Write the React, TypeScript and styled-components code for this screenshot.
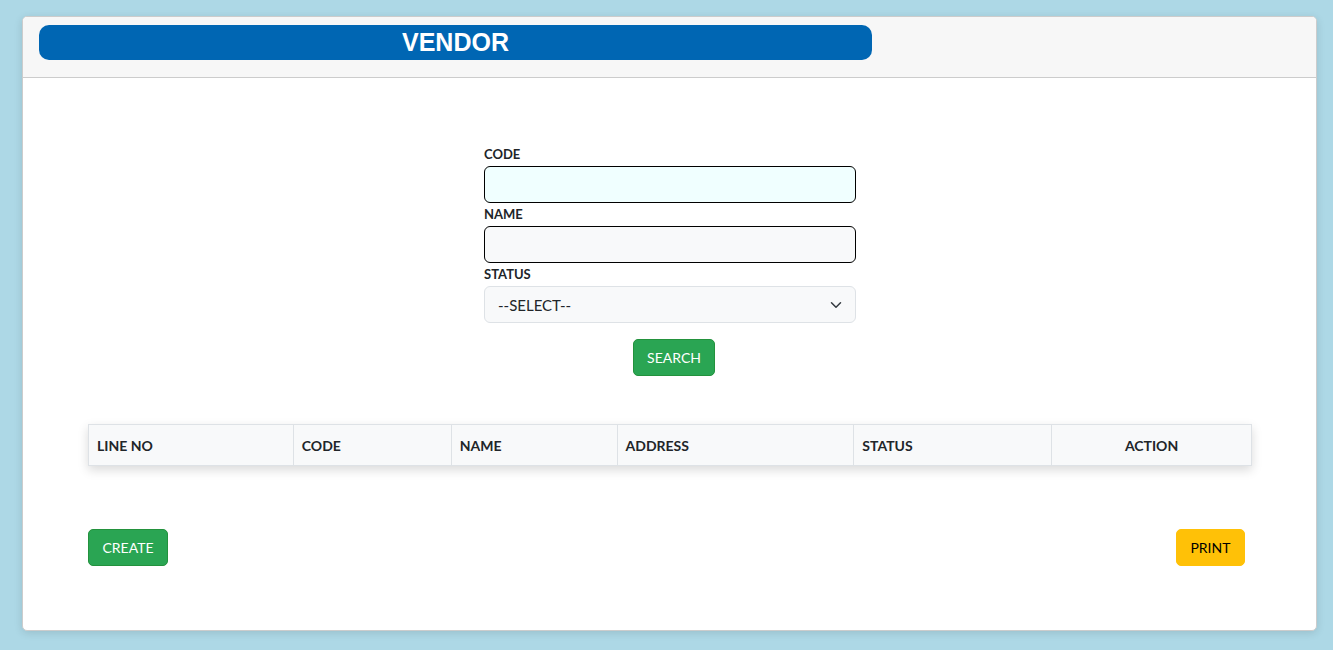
import React from 'react'
import styled, { createGlobalStyle } from 'styled-components'

const GlobalStyle = createGlobalStyle`
  * { box-sizing: border-box; }
  body {
    margin: 0;
    background: #add8e6;
    font-family: Lato, "Noto Sans", sans-serif;
    color: #212529;
  }
`

const Page = styled.div`
  padding: 16px 16px 19px 22px;
  height: 650px;
`

const Card = styled.div`
  background: #fff;
  border: 1px solid #cccccc;
  border-radius: 5px;
  box-shadow: 0 2px 8px rgba(0, 0, 0, 0.12);
  height: 615px;
  display: flex;
  flex-direction: column;
  overflow: hidden;
`

const Header = styled.div`
  background: #f7f7f7;
  border-bottom: 1px solid #cccccc;
  height: 61px;
  padding: 8px 16px;
`

const TitleBar = styled.div`
  width: 833px;
  height: 35px;
  border-radius: 10px;
  background: #0066b3;
  color: #fff;
  font-family: "Liberation Sans", Arial, sans-serif;
  font-weight: 700;
  font-size: 25px;
  display: flex;
  align-items: center;
  justify-content: center;
`

const Body = styled.div`
  padding: 65px 64px 0 65px;
  display: flex;
  flex-direction: column;
`

const Form = styled.div`
  width: 372px;
  align-self: center;
  margin-left: 0;
  display: flex;
  flex-direction: column;
`

const Label = styled.label`
  font-size: 13px;
  font-weight: 700;
  color: #212529;
  height: 23px;
  line-height: 23px;
`

const Input = styled.input<{ $tint?: string }>`
  height: 37px;
  width: 100%;
  border: 1px solid #000;
  border-radius: 6px;
  background: ${p => p.$tint || '#f8f9fa'};
  font-size: 14px;
  padding: 6px 12px;
`

const SelectBox = styled.div`
  height: 37px;
  width: 100%;
  border: 1px solid #dee2e6;
  border-radius: 6px;
  background: #f8f9fa;
  font-size: 15px;
  color: #212529;
  padding: 0 13px 0 13px;
  display: flex;
  align-items: center;
  justify-content: space-between;
`

const Button = styled.button<{ $variant: 'success' | 'warning' }>`
  height: 37px;
  border-radius: 5px;
  font-family: Lato, "Noto Sans", sans-serif;
  font-size: 14px;
  padding: 0 13.5px;
  border: 1px solid ${p => (p.$variant === 'success' ? '#23923d' : '#ffc107')};
  background: ${p => (p.$variant === 'success' ? '#2aa553' : '#ffc107')};
  color: ${p => (p.$variant === 'success' ? '#fff' : '#000')};
`

const SearchRow = styled.div`
  display: flex;
  justify-content: center;
  margin-top: 16px;
  padding-left: 8px;
`

const Table = styled.table`
  margin-top: 48px;
  width: 1164px;
  border-collapse: collapse;
  background: #f8f9fa;
  box-shadow: 0 4px 10px rgba(0, 0, 0, 0.15);
`

const Th = styled.th<{ $w: number; $center?: boolean }>`
  width: ${p => p.$w}px;
  height: 41px;
  border: 1px solid #dee2e6;
  text-align: ${p => (p.$center ? 'center' : 'left')};
  padding: 0 8px;
  font-size: 14px;
  font-weight: 700;
  color: #212529;
`

const Footer = styled.div`
  margin-top: 63px;
  display: flex;
  justify-content: space-between;
  padding-right: 7px;
`

const columns: { label: string; w: number; center?: boolean }[] = [
  { label: 'LINE NO', w: 205 },
  { label: 'CODE', w: 158 },
  { label: 'NAME', w: 166 },
  { label: 'ADDRESS', w: 237 },
  { label: 'STATUS', w: 198 },
  { label: 'ACTION', w: 200, center: true },
]

export default function App() {
  return (
    <>
      <GlobalStyle />
      <Page>
        <Card>
          <Header>
            <TitleBar>VENDOR</TitleBar>
          </Header>
          <Body>
            <Form>
              <Label>CODE</Label>
              <Input $tint="#f0ffff" />
              <Label>NAME</Label>
              <Input />
              <Label>STATUS</Label>
              <SelectBox>
                <span>--SELECT--</span>
                <svg width="12" height="12" viewBox="0 0 16 16" fill="none">
                  <path d="M2 5l6 6 6-6" stroke="#343a40" strokeWidth="2" strokeLinecap="round" strokeLinejoin="round" />
                </svg>
              </SelectBox>
              <SearchRow>
                <Button $variant="success">SEARCH</Button>
              </SearchRow>
            </Form>
            <Table>
              <thead>
                <tr>
                  {columns.map(c => (
                    <Th key={c.label} $w={c.w} $center={c.center}>
                      {c.label}
                    </Th>
                  ))}
                </tr>
              </thead>
            </Table>
            <Footer>
              <Button $variant="success">CREATE</Button>
              <Button $variant="warning">PRINT</Button>
            </Footer>
          </Body>
        </Card>
      </Page>
    </>
  )
}
